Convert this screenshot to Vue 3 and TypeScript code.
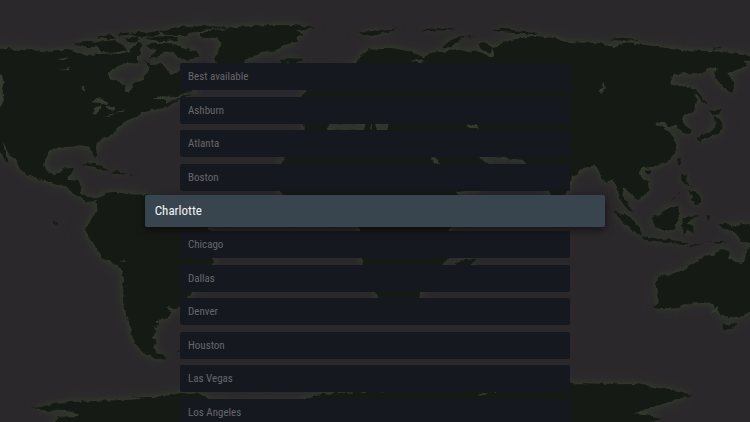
<script setup lang="ts">
import { ref } from 'vue'

const locations: string[] = [
  'Best available', 'Ashburn', 'Atlanta', 'Boston', 'Charlotte', 'Chicago',
  'Dallas', 'Denver', 'Houston', 'Las Vegas', 'Los Angeles',
]
const selected = ref('Charlotte')
</script>

<template>
  <main class="screen">
    <svg class="map" viewBox="0 0 2250 1266" preserveAspectRatio="xMidYMid slice" aria-hidden="true">
      <defs>
        <filter id="rough" x="0" y="0" width="100%" height="100%" color-interpolation-filters="sRGB">
          <feTurbulence type="fractalNoise" baseFrequency="0.05" numOctaves="3" seed="4" />
          <feDisplacementMap in="SourceGraphic" scale="14" xChannelSelector="R" yChannelSelector="G" />
        </filter>
        <filter id="wide" filterUnits="userSpaceOnUse" x="-60" y="-60" width="2370" height="1386" color-interpolation-filters="sRGB">
          <feGaussianBlur stdDeviation="22" />
        </filter>
        <filter id="tight" filterUnits="userSpaceOnUse" x="-60" y="-60" width="2370" height="1386" color-interpolation-filters="sRGB">
          <feGaussianBlur stdDeviation="9" />
        </filter>
        <g id="land" filter="url(#rough)">
          <rect width="2250" height="1266" fill="none" />
          <!-- Americas -->
          <path d="M-20 142L30 145 60 150 100 151 125 156 160 151 200 150 225 156 262 165 300 162 330 160 350 163 390 155 400 138 415 122 425 135 418 150 425 160 412 172 415 186 375 190 340 205 323 222 330 238 360 245 377 255 374 270 385 277 398 262 400 250 430 240 440 220 450 200 430 182 455 192 480 190 495 205 510 222 530 222 540 210 575 235 600 268 555 280 520 291 480 287 458 296 495 299 497 312 540 290 575 280 540 298 500 320 480 327 455 330 430 338 400 350 370 368 350 385 345 398 310 415 290 430 288 445 292 465 285 473 275 460 268 440 240 436 220 440 190 440 170 443 150 452 140 465 132 490 138 510 155 523 180 518 195 503 220 500 215 515 202 540 240 543 245 560 240 580 262 595 290 595 320 578 345 575 380 582 440 585 520 620 600 660 640 700 640 785 600 830 570 885 538 922 520 925 495 920 515 935 505 955 470 960 475 975 458 980 470 995 455 1010 472 1020 462 1045 475 1060 502 1075 470 1077 440 1064 410 1038 395 1005 385 970 375 930 370 880 368 820 355 800 310 775 280 730 258 695 262 670 280 650 292 633 290 603 262 606 240 592 220 581 200 560 160 548 120 540 80 525 58 505 45 480 25 455 8 425 14 450 27 488 15 480 0 455 -20 440Z" />
          <!-- Arctic islands -->
          <path d="M225 132L255 122 300 125 345 120 360 135 385 150 340 158 305 155 290 140 250 142ZM285 110L320 104 350 112 325 119ZM355 101L390 97 385 105 360 106ZM370 118L400 110 420 118 400 125ZM390 102L420 95 440 100 475 92 480 103 450 110 410 110ZM430 115L480 109 530 112 535 120 480 124ZM480 92L540 80 620 78 690 82 620 88 580 98 545 108 500 107ZM435 135L480 128 520 130 555 145 590 155 595 172 560 182 535 172 520 158 495 152 470 172 445 178 470 150Z" />
          <path d="M600 100L650 88 720 80 800 76 880 75 950 84 890 90 908 102 888 112 895 125 862 132 830 150 780 160 735 180 715 205 665 200 645 178 655 155 665 130 650 115 600 108ZM843 178L860 175 905 176 912 184 880 189 845 188Z" />
          <path d="M245 493L265 490 290 493 325 510 335 512 310 511 280 500ZM330 518L350 514 380 522 355 526ZM390 523L406 526 395 528ZM160 665L172 663 174 670 165 672ZM530 1050h8v5h-8Z" />
          <!-- Europe, Africa and Asia -->
          <path d="M1110 148L1130 145 1170 143 1210 150 1240 158 1275 172 1290 158 1320 156 1380 150 1400 155 1440 155 1470 170 1485 172 1478 145 1510 125 1560 115 1600 107 1670 115 1690 125 1750 128 1800 130 1840 142 1880 130 1940 135 2030 150 2100 152 2170 155 2270 172 2270 182 2230 182 2242 194 2220 207 2180 220 2195 240 2203 270 2195 280 2160 250 2145 230 2150 205 2130 205 2110 220 2050 220 2020 225 2010 250 2040 258 2070 262 2085 280 2090 310 2080 335 2050 348 2045 370 2075 390 2070 402 2050 400 2030 378 2005 378 1990 362 1965 370 1990 385 2010 400 2030 430 2025 460 2000 485 1960 500 1925 505 1915 520 1945 545 1950 570 1915 600 1890 580 1870 562 1865 580 1880 605 1900 636 1880 625 1862 600 1850 560 1840 537 1815 545 1800 520 1780 497 1745 505 1715 535 1710 570 1690 585 1680 650 1650 575 1570 480 1475 470 1450 460 1440 475 1480 500 1430 570 1365 576 1400 610 1345 690 1345 775 1275 860 1250 895 1190 930 1140 920 1130 880 1087 790 1080 690 1030 640 900 650 845 580 835 520 840 490 870 455 915 395 912 365 970 350 900 290 920 270 1070 190 1085 165ZM1400 375L1430 372 1437 385 1405 384ZM990 370L1100 370 1090 392 980 392ZM1115 372L1170 366 1160 394 1115 394ZM1110 370L1125 372 1135 392 1112 392ZM1292 472L1305 472 1320 492 1305 490ZM1230 182L1275 178 1262 190Z" fill-rule="evenodd" />
          <path d="M1370 790L1395 777 1430 776 1415 795 1395 830 1375 815ZM1075 95L1130 92 1190 89 1135 103 1115 108 1090 105ZM1265 88L1310 85 1370 86 1345 91 1280 91ZM1325 145L1345 122 1380 112 1420 108 1385 117 1360 130 1355 145ZM1435 132L1450 125 1480 145 1470 158 1445 150ZM1475 92L1510 86 1570 94 1615 101 1580 103 1530 98ZM1825 117L1870 113 1920 119 1870 123ZM2135 143L2160 141 2165 144 2140 146Z" />
          <!-- Japan, the Philippines and Indonesia -->
          <path d="M2065 262L2085 268 2110 295 2125 315 2105 302 2085 280ZM2145 218L2165 210 2190 232 2202 250 2200 277 2175 260 2155 245ZM2125 328L2145 330 2170 328 2155 343 2135 345ZM2144 348L2162 360 2168 385 2155 402 2130 410 2105 415 2092 420 2105 402 2135 397 2148 375ZM2090 410L2106 415 2102 425 2092 421ZM2032 476L2042 473 2040 490 2034 497ZM1937 510L1953 508 1950 523 1938 520ZM2043 523L2058 524 2060 545 2075 560 2058 555 2045 545ZM2065 570L2090 575 2100 590 2108 610 2090 615 2072 600 2080 590ZM2040 573L2025 595 2010 605 2038 580Z" />
          <path d="M1840 634L1875 645 1905 665 1925 690 1922 706 1895 690 1870 665ZM1955 650L1975 645 2010 622 2035 620 2038 660 2020 690 1990 690 1965 682ZM1925 709L1980 716 2060 726 2060 732 1980 728 1930 718ZM2048 652L2095 649 2075 658 2060 672 2080 675 2080 700 2065 685 2052 704 2045 685ZM2120 648L2130 645 2125 668ZM2160 668L2180 672 2205 680 2230 672 2260 678 2260 730 2225 725 2195 690 2165 685ZM2070 735L2110 728 2070 742ZM2120 724L2180 722 2160 728Z" />
          <path d="M1958 921L1975 910 1975 880 1968 850 1975 830 2030 818 2060 805 2085 785 2110 770 2140 768 2155 750 2190 755 2185 775 2225 795 2235 770 2245 745 2270 740 2270 925 2230 945 2200 955 2165 950 2150 925 2130 908 2080 905 2040 920 1995 925ZM2168 970L2188 974 2209 968 2197 985 2178 994 2168 990Z" />
          <!-- Antarctica -->
          <path d="M90 1225L130 1220 160 1208 230 1205 300 1202 380 1200 440 1195 390 1190 480 1192 530 1180 600 1182 640 1200 700 1210 900 1205 940 1185 1000 1180 1250 1170 1500 1175 1710 1150 1760 1150 1850 1153 1910 1152 1980 1165 2080 1185 2040 1195 1980 1215 1900 1240 1990 1255 1920 1280 150 1280 180 1250 240 1248 210 1232 130 1232Z" />
        </g>
        <g id="lakes" filter="url(#rough)">
          <rect width="2250" height="1266" fill="none" />
          <path d="M270 307L300 295 320 303 320 312 295 308ZM276 348L285 325 305 316 295 335ZM315 317L342 320 350 327 333 332 322 327ZM312 350L345 340 340 347 315 352ZM345 337L373 331 370 336ZM245 262L256 258 254 275 246 272ZM172 178L210 172 190 181ZM177 208L212 201 205 208ZM1795 272L1808 265 1812 246 1818 265 1802 279ZM-10 220L6 225 12 250 8 280 12 300 2 320-10 322ZM2130 935L2155 917 2153 928 2140 939ZM365 780h8v5h-8ZM1430 1188L1465 1178 1450 1190Z" />
        </g>
      </defs>
      <use href="#land" class="halo" filter="url(#wide)" />
      <use href="#land" class="edge" filter="url(#tight)" />
      <use href="#land" class="ground" />
      <use href="#lakes" class="water" />
    </svg>

    <ul class="locations" aria-label="Locations">
      <li v-for="name in locations" :key="name" class="item">
        <button
          type="button"
          class="location"
          :class="{ active: name === selected }"
          :aria-pressed="name === selected"
          @click="selected = name"
        >{{ name }}</button>
      </li>
    </ul>
  </main>
</template>

<style>
body {
  background: #2b282b;
}
</style>

<style scoped>
.screen {
  position: relative;
  height: 100vh;
  overflow: hidden;
  background: #2b282b;
  font-family: "Roboto Condensed", Roboto, "Liberation Sans", sans-serif;
}

.map {
  position: absolute;
  inset: 0;
  width: 100%;
  height: 100%;
}

.halo {
  fill: #343b2d;
  opacity: 0.6;
}

.edge {
  fill: #35442b;
  opacity: 0.8;
}

.ground {
  fill: #161a15;
}

.water {
  fill: #343b2e;
}

.locations {
  position: relative;
  display: flex;
  flex-direction: column;
  justify-content: space-between;
  width: 52%;
  height: calc(100vh - 59px);
  margin: 63px auto 0;
  padding: 0;
  list-style: none;
}

.item {
  display: flex;
  height: 27px;
}

.location {
  flex: 1;
  padding: 0 8px;
  border: 0;
  border-radius: 2px;
  background: #161820;
  color: #66676b;
  font: inherit;
  font-size: 11px;
  text-align: left;
}

.location.active {
  position: relative;
  z-index: 1;
  margin: -2px -4.7vw -3px;
  padding: 0 10px 2px;
  background: #39454e;
  color: #f2f3f4;
  font-size: 13px;
  box-shadow: 0 3px 9px rgba(0, 0, 0, 0.55);
}
</style>
